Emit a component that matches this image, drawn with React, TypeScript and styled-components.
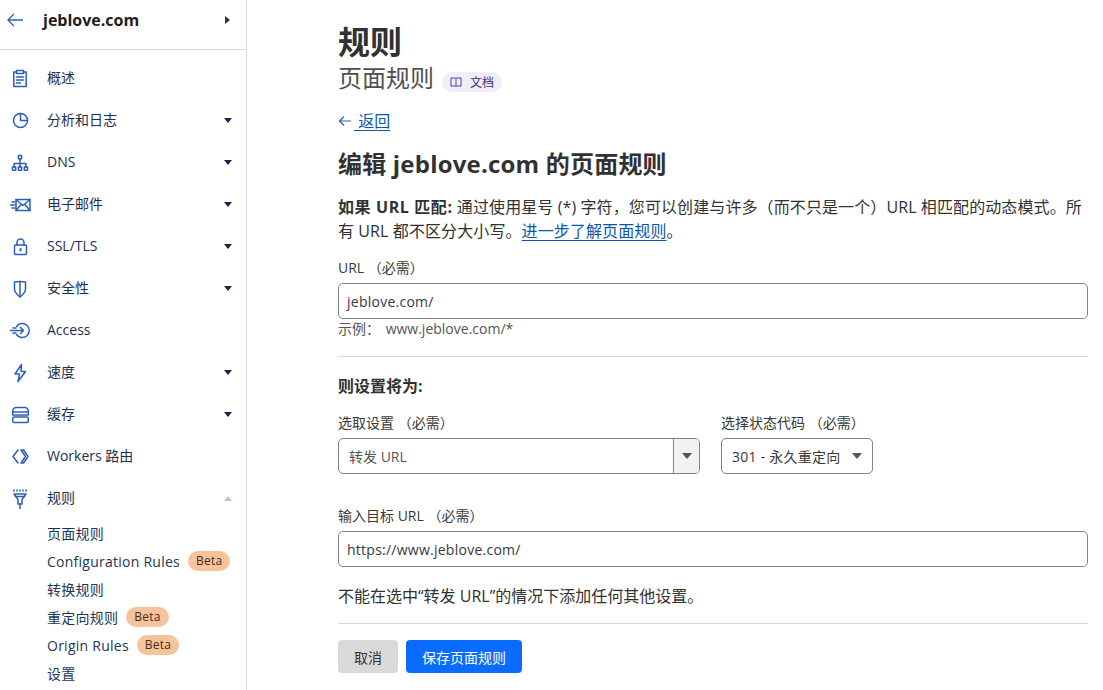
import React from "react";
import styled, { createGlobalStyle } from "styled-components";

const GlobalStyle = createGlobalStyle`
  html, body {
    margin: 0;
    padding: 0;
    height: 100%;
    overflow: hidden;
    background: #fff;
  }
  body {
    font-family: "Open Sans", "Noto Sans CJK SC", sans-serif;
    color: #313131;
  }
`;

const Page = styled.div`
  display: flex;
  width: 1103px;
  height: 690px;
  overflow: hidden;
`;

const Sidebar = styled.aside`
  flex: none;
  width: 246px;
  border-right: 1px solid #d9d9d9;
  overflow: hidden;
`;

const SideHeader = styled.div`
  display: flex;
  align-items: center;
  height: 50px;
  padding: 0 16px 10px 6px;
  box-sizing: border-box;
  border-bottom: 1px solid #d9d9d9;
`;

const ZoneName = styled.div`
  flex: 1;
  margin-left: 19px;
  font-size: 16px;
  font-weight: 700;
  color: #1d1d1d;
`;

const Nav = styled.nav`
  display: flex;
  flex-direction: column;
  padding-top: 7px;
`;

const NavRow = styled.div`
  display: flex;
  align-items: center;
  height: 42px;
  padding-left: 10px;
  padding-right: 14px;
`;

const NavIcon = styled.svg`
  flex: none;
  width: 20px;
  height: 20px;
  overflow: visible;
  fill: none;
  stroke: #2c5fb8;
  stroke-width: 1.5;
  stroke-linecap: round;
  stroke-linejoin: round;
`;

const NavLabel = styled.span`
  flex: 1;
  margin-left: 17px;
  font-size: 14px;
  line-height: 20px;
  color: #1d2f4f;
`;

const Caret = styled.span<{ $up?: boolean }>`
  flex: none;
  width: 0;
  height: 0;
  border-left: 4.5px solid transparent;
  border-right: 4.5px solid transparent;
  ${(p) =>
    p.$up
      ? "border-bottom: 5px solid #b7c8dc;"
      : "border-top: 5px solid #14264a;"}
`;

const RightCaret = styled.span`
  flex: none;
  width: 0;
  height: 0;
  border-top: 4.5px solid transparent;
  border-bottom: 4.5px solid transparent;
  border-left: 5px solid #333;
`;

const SubNav = styled.div`
  display: flex;
  flex-direction: column;
  padding-left: 47px;
`;

const SubRow = styled.div`
  display: flex;
  align-items: center;
  height: 28px;
  font-size: 14px;
  letter-spacing: 0.25px;
  color: #1d3557;
  white-space: nowrap;
`;

const BetaBadge = styled.span`
  margin-left: 8px;
  padding: 0 8px;
  height: 20px;
  line-height: 20px;
  border-radius: 10px;
  background: #f6c49c;
  color: #4a2a12;
  font-size: 12px;
`;

const Main = styled.main`
  flex: none;
  width: 750px;
  margin-left: 91px;
  padding-top: 21px;
`;

const Title = styled.h1`
  margin: 0;
  font-size: 32px;
  line-height: 42px;
  font-weight: 700;
  color: #313131;
`;

const SubtitleRow = styled.div`
  display: flex;
  align-items: center;
  height: 27px;
`;

const Subtitle = styled.span`
  font-size: 24px;
  color: #4f4f4f;
  font-weight: 400;
`;

const DocPill = styled.span`
  display: inline-flex;
  align-items: center;
  gap: 8px;
  height: 20px;
  margin-left: 8px;
  margin-top: 10px;
  padding: 0 8px;
  border-radius: 10px;
  background: #f0eefb;
  color: #3b2d8c;
  font-size: 12px;
`;

const BackRow = styled.div`
  display: flex;
  align-items: center;
  margin-top: 18px;
  height: 24px;
  font-size: 16px;
`;

const BackArrow = styled.svg`
  flex: none;
  width: 14px;
  height: 14px;
  margin: 2px 2px 0 0;
  fill: none;
  stroke: #2c5fb8;
  stroke-width: 1.2;
`;

const BackLink = styled.a`
  display: inline-flex;
  align-items: center;
  color: #0b57b0;
  text-decoration: underline;
  text-underline-offset: 3px;
`;

const EditHeading = styled.h2`
  margin: 15px 0 0;
  font-size: 24px;
  line-height: 34px;
  font-weight: 700;
  letter-spacing: 0.2px;
  color: #313131;
`;

const Paragraph = styled.p`
  margin: 14px 0 0;
  font-size: 16px;
  line-height: 24px;
  letter-spacing: 0.1px;
  color: #313131;

  strong {
    letter-spacing: 0.6px;
  }
`;

const TextLink = styled.a`
  color: #0b57b0;
  text-decoration: underline;
  text-underline-offset: 3px;
`;

const FieldLabel = styled.div`
  font-size: 14px;
  line-height: 20px;
  color: #36393a;
`;

const TextInput = styled.div`
  display: flex;
  align-items: center;
  height: 36px;
  margin-top: 5px;
  padding: 0 8px;
  box-sizing: border-box;
  border: 1px solid #808285;
  border-radius: 5px;
  font-size: 14px;
  letter-spacing: 0.25px;
  color: #36393a;
`;

const UrlField = styled.div`
  margin-top: 15px;
`;

const Hint = styled.div`
  font-size: 14px;
  line-height: 20px;
  color: #555;
  word-spacing: 2px;
`;

const Divider = styled.hr<{ $top: number }>`
  margin: ${(p) => p.$top}px 0 0;
  border: none;
  border-top: 1px solid #d9d9d9;
`;

const SectionLabel = styled.div`
  margin-top: 18px;
  font-size: 16px;
  line-height: 22px;
  font-weight: 700;
  color: #313131;
`;

const SelectRow = styled.div`
  display: flex;
  gap: 21px;
  margin-top: 16px;
`;

const SelectColumn = styled.div<{ $width: number }>`
  width: ${(p) => p.$width}px;
`;

const ComboBox = styled.div`
  display: flex;
  align-items: stretch;
  height: 36px;
  margin-top: 5px;
  box-sizing: border-box;
  border: 1px solid #808285;
  border-radius: 5px;
  overflow: hidden;
`;

const ComboValue = styled.div`
  flex: 1;
  display: flex;
  align-items: center;
  padding-left: 10px;
  font-size: 14px;
  color: #555;
`;

const ComboArrow = styled.div`
  flex: none;
  width: 25px;
  display: flex;
  align-items: center;
  justify-content: center;
  border-left: 1px solid #808285;
  background: #f2f2f2;
`;

const GreyCaret = styled.span`
  flex: none;
  width: 0;
  height: 0;
  border-left: 5px solid transparent;
  border-right: 5px solid transparent;
  border-top: 6px solid #555;
`;

const NativeSelect = styled.div`
  display: flex;
  align-items: center;
  justify-content: space-between;
  height: 36px;
  margin-top: 5px;
  padding: 0 10px;
  box-sizing: border-box;
  border: 1px solid #808285;
  border-radius: 5px;
  font-size: 14px;
  letter-spacing: 0.25px;
  color: #36393a;
  white-space: nowrap;
`;

const TargetField = styled.div`
  margin-top: 32px;
`;

const Note = styled.p`
  margin: 18px 0 0;
  font-size: 16px;
  line-height: 22px;
  color: #313131;
`;

const ButtonRow = styled.div`
  display: flex;
  gap: 8px;
  margin-top: 16px;
`;

const Button = styled.button<{ $primary?: boolean }>`
  height: 33px;
  padding: 0 16px;
  border: none;
  border-radius: 4px;
  font-family: inherit;
  font-size: 14px;
  background: ${(p) => (p.$primary ? "#0a6cff" : "#d9d9d9")};
  color: ${(p) => (p.$primary ? "#fff" : "#313131")};
`;

const icons: Record<string, React.ReactNode> = {
  overview: (
    <>
      <path d="M6.500 4H3.800v14.500h12.400V4H13.500" />
      <rect x="6.500" y="2.500" width="7" height="3" />
      <path d="M6.500 9h7M6.500 12h7M6.500 15h4" />
    </>
  ),
  analytics: (
    <>
      <circle cx="10.500" cy="10.500" r="7" />
      <path d="M10.500 3.500v7h7" />
    </>
  ),
  dns: (
    <>
      <rect x="8.400" y="3.500" width="3.200" height="3.200" />
      <rect x="2.500" y="15" width="3.200" height="3.200" />
      <rect x="8.400" y="15" width="3.200" height="3.200" />
      <rect x="14.300" y="15" width="3.200" height="3.200" />
      <path d="M10 6.700V15M4.100 15v-3.500h11.800V15" />
    </>
  ),
  email: (
    <>
      <rect x="6" y="5.500" width="14" height="11" />
      <path d="M6 5.500l7 6 7-6M6 16.500l5-6M20 16.500l-5-6M2 8h2.500M0.500 11h4M2 14h2.500" />
    </>
  ),
  lock: (
    <>
      <rect x="4.500" y="9" width="12" height="9.500" rx="1" />
      <path d="M7 9V6.500a3.500 3.500 0 0 1 7 0V9" />
      <path d="M10.500 13v1.400" strokeWidth="2" />
    </>
  ),
  shield: (
    <>
      <path d="M4.500 4q5.500-1 11 0v7c0 3.500-3 6-5.500 8-2.500-2-5.500-4.500-5.500-8z" />
      <path d="M10 3.500V19" />
    </>
  ),
  access: (
    <>
      <path d="M6.500 6.500a7 7 0 1 1 0 8" />
      <path d="M0.500 10.500h13M10.500 7.500l3 3-3 3M3 8h3M3 13h3" />
    </>
  ),
  speed: <path d="M11.500 2.500L5 12h4.500L8 19.500 15.500 9.500h-4.500z" />,
  cache: (
    <>
      <path d="M2.700 11V7a3.500 3.500 0 0 1 3.500-3.500h8.600A3.500 3.500 0 0 1 18.300 7v4z" />
      <rect x="2.700" y="13" width="15.600" height="5.500" rx="1.500" />
      <path d="M2.700 8h15.600" />
    </>
  ),
  workers: (
    <>
      <path d="M8 4L3 10.500 8 17" />
      <path d="M11 4h2.500L18 10.500 13.500 17H11l4.500-6.500z" />
    </>
  ),
  rules: (
    <>
      <path d="M4 6h12l-4 5.500V16H8v-4.500z" />
      <path d="M5.500 8.500h9" />
      <path d="M10 16v4.500M4 2v1M7 2v1M10 2v1M13 2v1M16 2v1" />
    </>
  ),
};

type NavItem = { icon: string; label: string; caret?: boolean; up?: boolean };

const navItems: NavItem[] = [
  { icon: "overview", label: "概述" },
  { icon: "analytics", label: "分析和日志", caret: true },
  { icon: "dns", label: "DNS", caret: true },
  { icon: "email", label: "电子邮件", caret: true },
  { icon: "lock", label: "SSL/TLS", caret: true },
  { icon: "shield", label: "安全性", caret: true },
  { icon: "access", label: "Access" },
  { icon: "speed", label: "速度", caret: true },
  { icon: "cache", label: "缓存", caret: true },
  { icon: "workers", label: "Workers 路由" },
  { icon: "rules", label: "规则", caret: true, up: true },
];

const subItems = [
  { label: "页面规则" },
  { label: "Configuration Rules", beta: true },
  { label: "转换规则" },
  { label: "重定向规则", beta: true },
  { label: "Origin Rules", beta: true },
  { label: "设置" },
];

function App() {
  return (
    <Page>
      <GlobalStyle />
      <Sidebar>
        <SideHeader>
          <svg width="18" height="18" viewBox="0 0 18 18" fill="none" stroke="#2c5fb8" strokeWidth="1.300">
            <path d="M17 9H2M8 3L2 9l6 6" />
          </svg>
          <ZoneName>jeblove.com</ZoneName>
          <RightCaret />
        </SideHeader>
        <Nav>
          {navItems.map((item) => (
            <NavRow key={item.label}>
              <NavIcon viewBox="0 0 20 20">{icons[item.icon]}</NavIcon>
              <NavLabel>{item.label}</NavLabel>
              {item.caret && <Caret $up={item.up} />}
            </NavRow>
          ))}
        </Nav>
        <SubNav>
          {subItems.map((item) => (
            <SubRow key={item.label}>
              {item.label}
              {item.beta && <BetaBadge>Beta</BetaBadge>}
            </SubRow>
          ))}
        </SubNav>
      </Sidebar>
      <Main>
        <Title>规则</Title>
        <SubtitleRow>
          <Subtitle>页面规则</Subtitle>
          <DocPill>
            <svg width="12" height="12" viewBox="0 0 12 12" fill="none" stroke="#4b3fa8" strokeWidth="1">
              <path d="M1 2h4.500l.5.500.5-.5H11v8H6.500l-.5.500-.5-.5H1zM6 2.500v8" />
            </svg>
            文档
          </DocPill>
        </SubtitleRow>
        <BackRow>
          <BackArrow viewBox="0 0 14 14">
            <path d="M13 7H1.500M6 2.500L1.500 7 6 11.500" />
          </BackArrow>
          <BackLink>&nbsp;返回</BackLink>
        </BackRow>
        <EditHeading>编辑 jeblove.com 的页面规则</EditHeading>
        <Paragraph>
          <strong>如果 URL 匹配:</strong> 通过使用星号 (*) 字符，您可以创建与许多（而不只是一个）URL 相匹配的动态模式。所有 URL 都不区分大小写。
          <TextLink>进一步了解页面规则</TextLink>。
        </Paragraph>
        <UrlField>
          <FieldLabel>URL （必需）</FieldLabel>
          <TextInput>jeblove.com/</TextInput>
          <Hint>示例： www.jeblove.com/*</Hint>
        </UrlField>
        <Divider $top={17} />
        <SectionLabel>则设置将为:</SectionLabel>
        <SelectRow>
          <SelectColumn $width={362}>
            <FieldLabel>选取设置 （必需）</FieldLabel>
            <ComboBox>
              <ComboValue>转发 URL</ComboValue>
              <ComboArrow>
                <GreyCaret />
              </ComboArrow>
            </ComboBox>
          </SelectColumn>
          <SelectColumn $width={152}>
            <FieldLabel>选择状态代码 （必需）</FieldLabel>
            <NativeSelect>
              301 - 永久重定向
              <GreyCaret />
            </NativeSelect>
          </SelectColumn>
        </SelectRow>
        <TargetField>
          <FieldLabel>输入目标 URL （必需）</FieldLabel>
          <TextInput>https://www.jeblove.com/</TextInput>
        </TargetField>
        <Note>不能在选中“转发 URL”的情况下添加任何其他设置。</Note>
        <Divider $top={16} />
        <ButtonRow>
          <Button>取消</Button>
          <Button $primary>保存页面规则</Button>
        </ButtonRow>
      </Main>
    </Page>
  );
}

export default App;
